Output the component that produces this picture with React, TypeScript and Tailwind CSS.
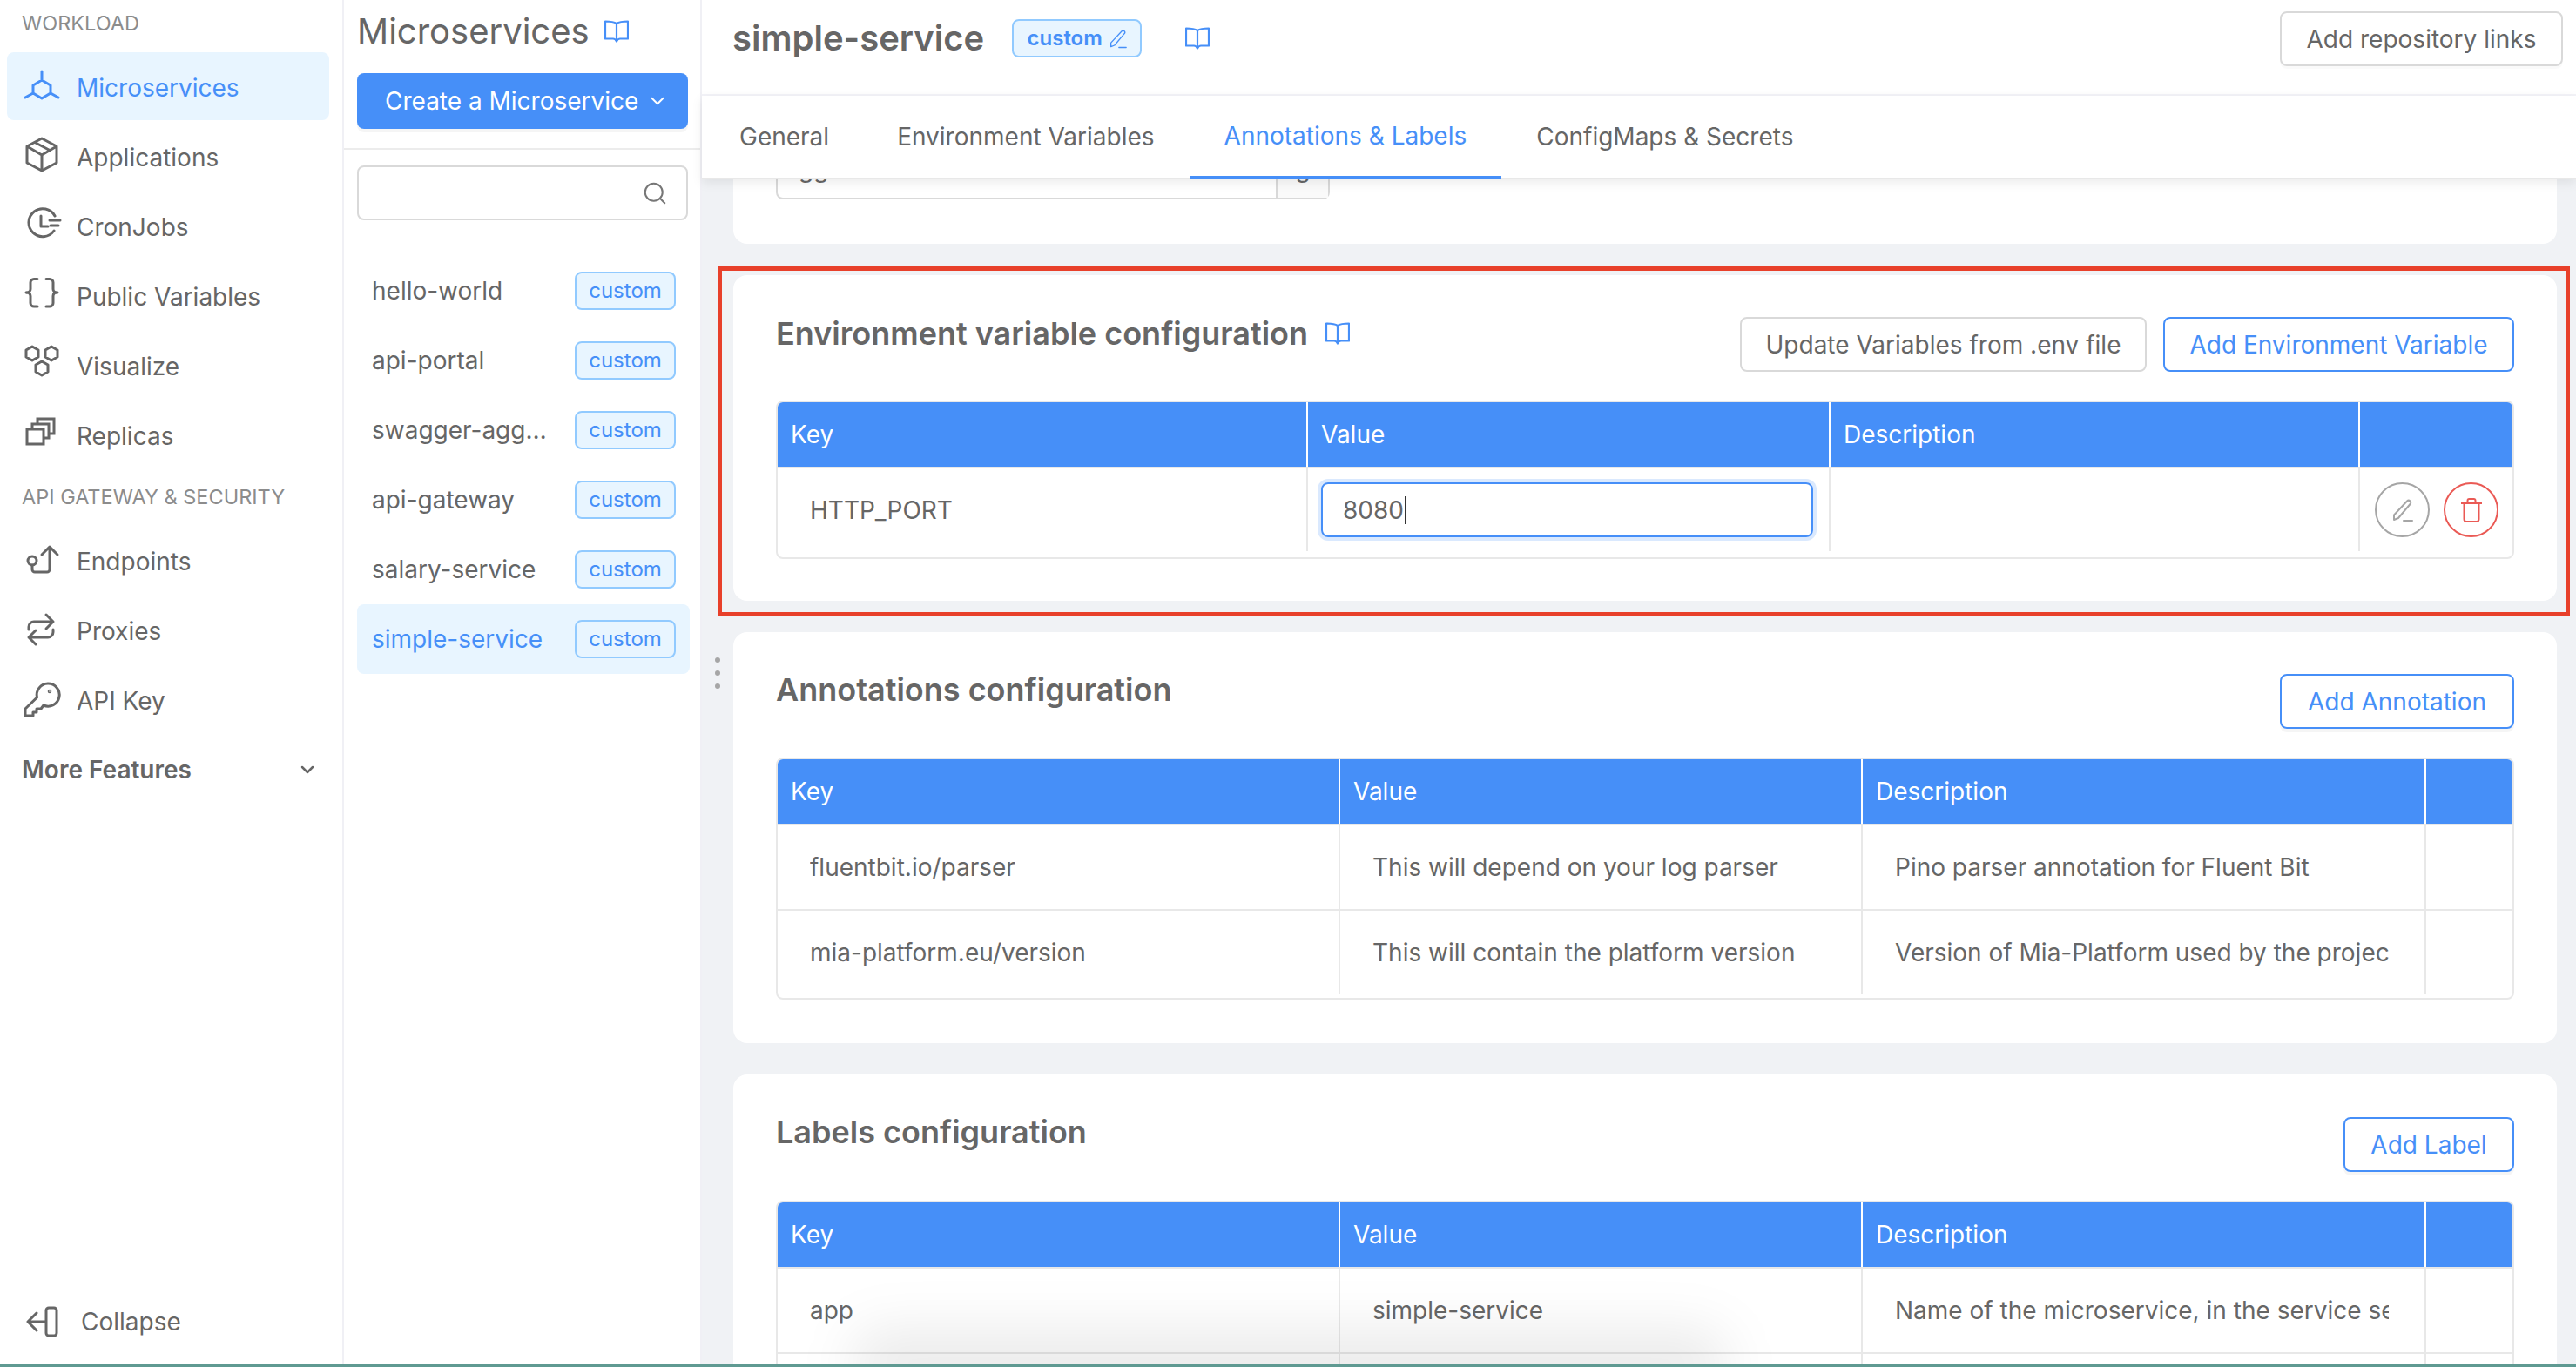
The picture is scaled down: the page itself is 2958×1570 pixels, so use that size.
import type { ReactNode } from 'react';
import { ChevronDown, Search } from 'lucide-react';

const BLUE = '#468ff8';

function Glyph({ children, active }: { children: ReactNode; active?: boolean }) {
  return (
    <svg
      viewBox="0 0 40 40"
      fill="none"
      stroke={active ? BLUE : '#666666'}
      strokeWidth="3"
      strokeLinecap="round"
      strokeLinejoin="round"
      className="h-10 w-10 shrink-0 overflow-visible"
    >
      {children}
    </svg>
  );
}

function BookIcon({ className }: { className: string }) {
  return (
    <svg viewBox="0 0 28 26" fill="none" stroke={BLUE} strokeWidth="2.2" strokeLinejoin="round" className={className}>
      <path d="M14 4C11 2 7 1.500 1 1.500V21.500H10C12 21.500 13 22.500 14 24.500C15 22.500 16 21.500 18 21.500H27V1.500C21 1.500 17 2 14 4V24" />
    </svg>
  );
}

function PencilIcon({ className, color, width = 2 }: { className: string; color: string; width?: number }) {
  return (
    <svg viewBox="0 0 24 26" fill="none" stroke={color} strokeWidth={width} strokeLinejoin="round" strokeLinecap="round" className={className}>
      <path d="M17 2.500C18 1.500 19.500 1.500 20.500 2.500C21.500 3.500 21.500 5 20.500 6L7 22L2 24V18.500Z" />
      <path d="M13 25H23" />
    </svg>
  );
}

function TrashIcon() {
  return (
    <svg viewBox="0 0 26 28" fill="none" stroke="#ea5a55" strokeWidth="2" strokeLinejoin="round" className="h-7 w-[26px]">
      <path d="M1 6H25" />
      <path d="M8.500 6V3C8.500 2 9.300 1 10.300 1H15.700C16.700 1 17.500 2 17.500 3V6" />
      <path d="M4.500 6V24C4.500 25.700 5.600 27 7 27H19C20.400 27 21.500 25.700 21.500 24V6" />
    </svg>
  );
}

const hexagon = (x: number, y: number) =>
  `M${x} ${y - 8}L${x + 7} ${y - 4}V${y + 4}L${x} ${y + 8}L${x - 7} ${y + 4}V${y - 4}Z`;

const navIcons: Record<string, ReactNode> = {
  Microservices: (
    <path d="M20 13L30 19V28L20 34L10 28V19ZM20 3V13M1 33L10 28M39 33L30 28" />
  ),
  Applications: (
    <path d="M20 0L37 9V28L20 37L3 28V9ZM3 9L20 19L37 9M20 19V37M12 4.500L29 13.500" />
  ),
  CronJobs: (
    <>
      <path d="M35 9A16 16 0 1 0 34 26" />
      <path d="M19 9V21H27M29 14H41M30 20H39" />
    </>
  ),
  'Public Variables': (
    <path d="M15 1.500H11A4 4 0 0 0 7 5.500V13A4 4 0 0 1 2 17A4 4 0 0 1 7 21V29A4 4 0 0 0 11 33H15M25 1.500H29A4 4 0 0 1 33 5.500V13A4 4 0 0 0 38 17A4 4 0 0 0 33 21V29A4 4 0 0 1 29 33H25" />
  ),
  Visualize: <path d={`${hexagon(9, 7)}${hexagon(31, 7)}${hexagon(20, 24)}`} />,
  Replicas: <path d="M3 14H22V31H3ZM9 14V8H28V24H22M15 8V2H34V19H28" strokeLinejoin="miter" />,
  Endpoints: (
    <>
      <circle cx="9" cy="21" r="5" />
      <path d="M9 26V31A3 3 0 0 0 12 34H26A3 3 0 0 0 29 31V5M20 14L29 5L38 14" />
    </>
  ),
  Proxies: <path d="M5 20V17A6 6 0 0 1 11 11H33M25 3L33 11L25 19M33 20V23A6 6 0 0 1 27 29H5M13 21L5 29L13 37" />,
  'API Key': (
    <>
      <path d="M14.500 18L1 31V39H10V35H14V31H19L22 27A13 13 0 1 0 14.500 18Z" />
      <circle cx="29" cy="11" r="0.800" />
    </>
  ),
};

function NavRow({ label, active }: { label: string; active?: boolean }) {
  return (
    <div
      className={`mx-2 flex h-[78px] w-[370px] items-center gap-5 rounded-lg pl-5 text-[28px] ${
        active ? 'bg-[#e8f5ff] text-[#468ff8]' : 'text-[#666666]'
      }`}
    >
      <Glyph active={active}>{navIcons[label]}</Glyph>
      <span className="pt-[3px]">{label}</span>
    </div>
  );
}

function Sidebar() {
  return (
    <aside className="flex w-[395px] shrink-0 flex-col border-r-2 border-[#f0f0f5] bg-white">
      <div className="mt-3 mb-[18px] h-[30px] pl-[25px] text-[23.5px] leading-[30px] text-[#8c8c8c]">WORKLOAD</div>
      <div className="flex flex-col gap-0.5">
        <NavRow label="Microservices" active />
        <NavRow label="Applications" />
        <NavRow label="CronJobs" />
        <NavRow label="Public Variables" />
        <NavRow label="Visualize" />
        <NavRow label="Replicas" />
      </div>
      <div className="my-[18px] h-[30px] pl-[25px] text-[23.5px] leading-[30px] text-[#8c8c8c]">API GATEWAY &amp; SECURITY</div>
      <div className="flex flex-col gap-0.5">
        <NavRow label="Endpoints" />
        <NavRow label="Proxies" />
        <NavRow label="API Key" />
      </div>
      <div className="mt-[3px] flex h-[78px] items-center justify-between pr-[28px] pl-[25px] text-[28px] font-semibold text-[#666666]">
        <span>More Features</span>
        <ChevronDown size={24} strokeWidth={2.5} />
      </div>
      <div className="mt-auto mb-[9px] ml-7 flex h-[78px] items-center gap-[25px] text-[28px] text-[#666666]">
        <Glyph>
          <rect x="25" y="4" width="12" height="32" rx="3" />
          <path d="M24 20H4M14 10L4 20L14 30" />
        </Glyph>
        <span>Collapse</span>
      </div>
    </aside>
  );
}

function Tag({ children }: { children: ReactNode }) {
  return (
    <span className="flex h-11 w-[116px] shrink-0 items-center justify-center rounded-lg border-2 border-[#91caff] bg-[#e8f5ff] text-[24px] text-[#468ff8]">
      {children}
    </span>
  );
}

const services = ['hello-world', 'api-portal', 'swagger-agg…', 'api-gateway', 'salary-service', 'simple-service'];

function ServiceList() {
  return (
    <section className="flex w-[411px] shrink-0 flex-col border-r-2 border-[#f0f0f5] bg-white">
      <div className="h-[172px] border-b-2 border-[#ececec] px-[15px]">
        <div className="mt-3.5 flex h-[44px] items-center gap-[17px] text-[40px] text-[#666666]">
          <span>Microservices</span>
          <BookIcon className="h-[26px] w-7" />
        </div>
        <button className="mt-[26px] flex h-16 w-[380px] items-center gap-[9px] rounded-lg bg-[#468ff8] pl-8 text-[28px] text-white shadow-[0_4px_0_rgba(0,0,0,0.04)]">
          <span>Create a Microservice</span>
          <ChevronDown size={26} strokeWidth={1.8} />
        </button>
      </div>
      <div className="mt-[18px] ml-[15px] flex h-[63px] w-[380px] items-center justify-end rounded-lg border-2 border-[#d9d9d9] pr-[21px]">
        <Search size={30} strokeWidth={1.6} className="text-[#777777]" />
      </div>
      <div className="mt-[41px] ml-[15px] flex w-[382px] flex-col">
        {services.map((name) => {
          const active = name === 'simple-service';
          return (
            <div
              key={name}
              className={`flex h-20 items-center justify-between rounded-lg pr-4 pl-[17px] text-[28px] ${
                active ? 'bg-[#e8f5ff] text-[#468ff8]' : 'text-[#666666]'
              }`}
            >
              <span>{name}</span>
              <Tag>custom</Tag>
            </div>
          );
        })}
      </div>
    </section>
  );
}

function TopBar() {
  return (
    <header className="flex h-[110px] shrink-0 items-start justify-between border-b-2 border-[#f3f3f8] bg-white pr-[15px] pl-[35px]">
      <div className="flex h-[88px] items-center">
        <h1 className="text-[40px] font-semibold text-[#666666]">simple-service</h1>
        <span className="ml-[32px] flex h-[44px] w-[149px] items-center justify-center gap-2 rounded-lg border-2 border-[#91caff] bg-[#e8f5ff] text-[24px] font-semibold text-[#468ff8]">
          custom
          <PencilIcon className="h-[25px] w-5" color={BLUE} width={1.6} />
        </span>
        <BookIcon className="ml-[50px] h-[26px] w-7" />
      </div>
      <button className="mt-[13px] flex h-[63px] w-[325px] items-center justify-center rounded-lg border-2 border-[#d9d9d9] bg-white text-[28px] text-[#666666] shadow-[0_3px_0_rgba(0,0,0,0.02)]">
        Add repository links
      </button>
    </header>
  );
}

function Tabs() {
  return (
    <nav className="relative z-10 flex h-[96px] shrink-0 border-b-2 border-[#e8e8e8] bg-white pl-[3px] text-[28px] text-[#666666] shadow-[0_4px_12px_rgba(0,0,0,0.08)]">
      <div className="flex items-center pr-[38px] pl-10">General</div>
      <div className="flex items-center px-10">Environment Variables</div>
      <div className="-mb-0.5 flex items-center border-b-4 border-[#468ff8] px-10 text-[#468ff8]">Annotations &amp; Labels</div>
      <div className="flex items-center px-10">ConfigMaps &amp; Secrets</div>
    </nav>
  );
}

type Cell = ReactNode;

function DataTable({
  cols,
  rows,
  rowHeight,
  valueIndent,
}: {
  cols: string;
  rows: Cell[][];
  rowHeight: string;
  valueIndent: boolean;
}) {
  const heads = ['Key', 'Value', 'Description', ''];
  return (
    <div className="overflow-hidden rounded-lg border-2 border-[#e8e8e8] text-[28px] text-[#666666]">
      <div className={`grid h-[76px] border-b-2 border-[#e8e8e8] bg-[#468ff8] text-white ${cols}`}>
        {heads.map((head, i) => (
          <div key={i} className="flex items-center border-r-2 border-white pl-[15px] last:border-r-0">
            {head}
          </div>
        ))}
      </div>
      {rows.map((row, r) => (
        <div key={r} className={`grid border-[#e8e8e8] not-last:border-b-2 ${cols} ${rowHeight}`}>
          {row.map((cell, i) => (
            <div
              key={i}
              className={`flex items-center overflow-hidden border-r-2 border-[#e8e8e8] whitespace-nowrap last:border-r-0 ${
                i === 0 ? 'pl-[37px]' : valueIndent && i < 3 ? 'pr-[41px] pl-[37px]' : ''
              }`}
            >
              {typeof cell === 'string' ? <span className="w-full overflow-hidden">{cell}</span> : cell}
            </div>
          ))}
        </div>
      ))}
    </div>
  );
}

function EnvCard() {
  return (
    <div className="h-[374px] shrink-0 rounded-2xl bg-white px-[49px] pt-[45px]">
      <div className="flex items-start justify-between">
        <h2 className="flex h-11 items-center gap-5 text-[36px] font-semibold text-[#666666]">
          Environment variable configuration
          <BookIcon className="h-[26px] w-7" />
        </h2>
        <div className="mt-[3px] flex gap-[19px] text-[28px]">
          <button className="flex h-[63px] w-[467px] items-center justify-center rounded-lg border-2 border-[#d9d9d9] text-[#666666]">
            Update Variables from .env file
          </button>
          <button className="flex h-[63px] w-[403px] items-center justify-center rounded-lg border-2 border-[#468ff8] text-[#468ff8]">
            Add Environment Variable
          </button>
        </div>
      </div>
      <div className="mt-[33px]">
        <DataTable
          cols="grid-cols-[609px_600px_608px_1fr]"
          rowHeight="h-[102px] pb-[7px]"
          valueIndent={false}
          rows={[
            [
              'HTTP_PORT',
              <div className="ml-[15px] flex h-[63px] w-[565px] items-center rounded-lg border-2 border-[#468ff8] pl-[23px] shadow-[0_0_0_4px_rgba(70,143,248,0.2)]">
                8080
                <span className="ml-px h-8 w-0.5 bg-[#333333]" />
              </div>,
              '',
              <div className="flex gap-4 pl-[17px]">
                <div className="flex h-[63px] w-[63px] items-center justify-center rounded-full border-2 border-[#a6a6a6]">
                  <PencilIcon className="h-[26px] w-6" color="#a6a6a6" />
                </div>
                <div className="flex h-[63px] w-[63px] items-center justify-center rounded-full border-2 border-[#ea5a55]">
                  <TrashIcon />
                </div>
              </div>,
            ],
          ]}
        />
      </div>
    </div>
  );
}

function ConfigCard({
  title,
  action,
  actionClass,
  rows,
  className,
  rowHeight,
}: {
  title: string;
  action: string;
  actionClass: string;
  rows: Cell[][];
  className: string;
  rowHeight: string;
}) {
  return (
    <div className={`rounded-2xl bg-white px-[49px] pt-11 ${className}`}>
      <div className="flex items-start justify-between">
        <h2 className="flex h-11 items-center text-[36px] font-semibold text-[#666666]">{title}</h2>
        <button
          className={`flex h-[63px] items-center justify-center rounded-lg border-2 border-[#468ff8] text-[28px] text-[#468ff8] shadow-[0_4px_0_rgba(0,0,0,0.04)] ${actionClass}`}
        >
          {action}
        </button>
      </div>
      <div className="mt-[33px]">
        <DataTable cols="grid-cols-[646px_600px_647px_1fr]" rowHeight={rowHeight} valueIndent rows={rows} />
      </div>
    </div>
  );
}

function Content() {
  return (
    <div className="relative flex min-h-0 flex-1 flex-col gap-9 overflow-hidden bg-[#f0f2f5] pr-[22px] pl-9">
      <div className="relative h-[74px] shrink-0 overflow-hidden rounded-b-2xl bg-white">
        <div className="absolute bottom-[51px] left-[49px] flex h-[63px] w-[636px] rounded-lg border-2 border-[#d9d9d9] text-[28px] text-[#666666]">
          <div className="flex h-full flex-1 items-end border-r-2 border-[#d9d9d9] pb-3 pl-6">gg</div>
          <div className="flex h-full w-[58px] items-end justify-center bg-[#fafafa] pb-3">g</div>
        </div>
      </div>
      <EnvCard />
      <ConfigCard
        title="Annotations configuration"
        action="Add Annotation"
        actionClass="mt-1 w-[269px]"
        className="h-[472px] shrink-0"
        rowHeight="h-[98px] last:h-[100px] last:pb-1"
        rows={[
          ['fluentbit.io/parser', 'This will depend on your log parser', 'Pino parser annotation for Fluent Bit', ''],
          ['mia-platform.eu/version', 'This will contain the platform version', 'Version of Mia-Platform used by the project', ''],
        ]}
      />
      <ConfigCard
        title="Labels configuration"
        action="Add Label"
        actionClass="mt-[5px] w-[196px]"
        className="h-[500px] shrink-0"
        rowHeight="h-[98px]"
        rows={[
          ['app', 'simple-service', 'Name of the microservice, in the service selector', ''],
          ['', '', '', ''],
        ]}
      />
      <div className="absolute top-[549px] left-[15px] flex flex-col gap-[9px]">
        <span className="h-1.5 w-1.5 rounded-full bg-[#a6a6a6]" />
        <span className="h-1.5 w-1.5 rounded-full bg-[#a6a6a6]" />
        <span className="h-1.5 w-1.5 rounded-full bg-[#a6a6a6]" />
      </div>
      <div className="absolute top-[100px] left-[18px] h-[402px] w-[2127px] border-[5px] border-[#e8402a]" />
      <div className="absolute -bottom-10 left-[170px] h-[80px] w-[1010px] rounded-[40px] bg-black/[0.08] blur-[30px]" />
    </div>
  );
}

export default function App() {
  return (
    <div className="flex h-[1570px] w-[2958px] flex-col overflow-hidden bg-white font-[Inter,sans-serif]">
      <div className="flex min-h-0 flex-1">
        <Sidebar />
        <ServiceList />
        <main className="flex min-w-0 flex-1 flex-col">
          <TopBar />
          <Tabs />
          <Content />
        </main>
      </div>
      <div className="h-1 shrink-0 bg-[#5f9a92]" />
    </div>
  );
}
